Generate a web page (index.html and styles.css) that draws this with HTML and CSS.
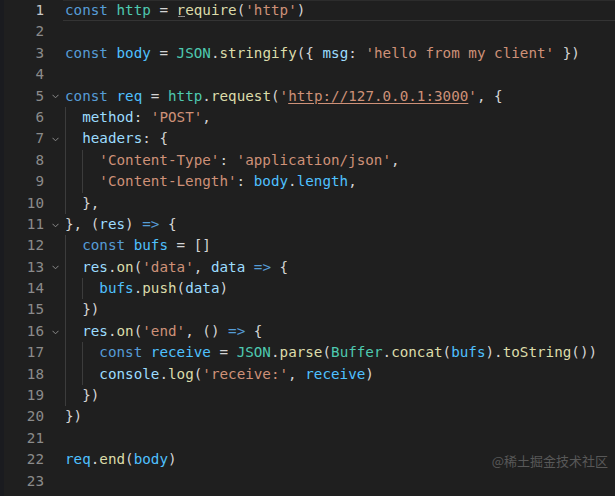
FILE: index.html
```html
<!DOCTYPE html>
<html>
<head>
<meta charset="utf-8">
<link rel="stylesheet" href="styles.css">
</head>
<body>
<div class="editor">
  <div class="line current"><span class="num">1</span><span class="fold"></span><span class="code"><span class="k">const</span> <span class="t">http</span> = <span class="f hint">r</span><span class="f">equire</span>(<span class="s">'http'</span>)</span></div>
  <div class="line"><span class="num">2</span><span class="fold"></span><span class="code"></span></div>
  <div class="line"><span class="num">3</span><span class="fold"></span><span class="code"><span class="k">const</span> <span class="c">body</span> = <span class="t">JSON</span>.<span class="f">stringify</span>({ <span class="v">msg</span>: <span class="s">'hello from my client'</span> })</span></div>
  <div class="line"><span class="num">4</span><span class="fold"></span><span class="code"></span></div>
  <div class="line"><span class="num">5</span><span class="fold"><svg width="7" height="5" viewBox="0 0 7 5"><polyline points="0.5,0.8 3.5,3.8 6.5,0.8" fill="none" stroke="#8b8b8b" stroke-width="1"/></svg></span><span class="code"><span class="k">const</span> <span class="c">req</span> = <span class="t">http</span>.<span class="f">request</span>(<span class="s">'<span class="link">http://127.0.0.1:3000</span>'</span>, {</span></div>
  <div class="line"><span class="num">6</span><span class="fold"></span><span class="code"><span class="ind"></span><span class="v">method</span>: <span class="s">'POST'</span>,</span></div>
  <div class="line"><span class="num">7</span><span class="fold"><svg width="7" height="5" viewBox="0 0 7 5"><polyline points="0.5,0.8 3.5,3.8 6.5,0.8" fill="none" stroke="#8b8b8b" stroke-width="1"/></svg></span><span class="code"><span class="ind"></span><span class="v">headers</span>: {</span></div>
  <div class="line"><span class="num">8</span><span class="fold"></span><span class="code"><span class="ind"></span><span class="ind"></span><span class="s">'Content-Type'</span>: <span class="s">'application/json'</span>,</span></div>
  <div class="line"><span class="num">9</span><span class="fold"></span><span class="code"><span class="ind"></span><span class="ind"></span><span class="s">'Content-Length'</span>: <span class="c">body</span>.<span class="c">length</span>,</span></div>
  <div class="line"><span class="num">10</span><span class="fold"></span><span class="code"><span class="ind"></span>},</span></div>
  <div class="line"><span class="num">11</span><span class="fold"><svg width="7" height="5" viewBox="0 0 7 5"><polyline points="0.5,0.8 3.5,3.8 6.5,0.8" fill="none" stroke="#8b8b8b" stroke-width="1"/></svg></span><span class="code">}, (<span class="v">res</span>) <span class="k">=&gt;</span> {</span></div>
  <div class="line"><span class="num">12</span><span class="fold"></span><span class="code"><span class="ind"></span><span class="k">const</span> <span class="c">bufs</span> = []</span></div>
  <div class="line"><span class="num">13</span><span class="fold"><svg width="7" height="5" viewBox="0 0 7 5"><polyline points="0.5,0.8 3.5,3.8 6.5,0.8" fill="none" stroke="#8b8b8b" stroke-width="1"/></svg></span><span class="code"><span class="ind"></span><span class="v">res</span>.<span class="f">on</span>(<span class="s">'data'</span>, <span class="v">data</span> <span class="k">=&gt;</span> {</span></div>
  <div class="line"><span class="num">14</span><span class="fold"></span><span class="code"><span class="ind"></span><span class="ind"></span><span class="c">bufs</span>.<span class="f">push</span>(<span class="v">data</span>)</span></div>
  <div class="line"><span class="num">15</span><span class="fold"></span><span class="code"><span class="ind"></span>})</span></div>
  <div class="line"><span class="num">16</span><span class="fold"><svg width="7" height="5" viewBox="0 0 7 5"><polyline points="0.5,0.8 3.5,3.8 6.5,0.8" fill="none" stroke="#8b8b8b" stroke-width="1"/></svg></span><span class="code"><span class="ind"></span><span class="v">res</span>.<span class="f">on</span>(<span class="s">'end'</span>, () <span class="k">=&gt;</span> {</span></div>
  <div class="line"><span class="num">17</span><span class="fold"></span><span class="code"><span class="ind"></span><span class="ind"></span><span class="k">const</span> <span class="c">receive</span> = <span class="t">JSON</span>.<span class="f">parse</span>(<span class="t">Buffer</span>.<span class="f">concat</span>(<span class="c">bufs</span>).<span class="f">toString</span>())</span></div>
  <div class="line"><span class="num">18</span><span class="fold"></span><span class="code"><span class="ind"></span><span class="ind"></span><span class="v">console</span>.<span class="f">log</span>(<span class="s">'receive:'</span>, <span class="c">receive</span>)</span></div>
  <div class="line"><span class="num">19</span><span class="fold"></span><span class="code"><span class="ind"></span>})</span></div>
  <div class="line"><span class="num">20</span><span class="fold"></span><span class="code">})</span></div>
  <div class="line"><span class="num">21</span><span class="fold"></span><span class="code"></span></div>
  <div class="line"><span class="num">22</span><span class="fold"></span><span class="code"><span class="c">req</span>.<span class="f">end</span>(<span class="c">body</span>)</span></div>
  <div class="line"><span class="num">23</span><span class="fold"></span><span class="code"></span></div>
  <div class="watermark">@稀土掘金技术社区</div>
</div>
</body>
</html>
```
FILE: styles.css
```css
html, body {
  margin: 0;
  padding: 0;
  background: #1f1f1f;
}
.editor {
  position: relative;
  width: 615px;
  height: 496px;
  overflow: hidden;
  background: #1f1f1f;
  border-left: 4px solid #1a1b1f;
  box-sizing: border-box;
  font-family: "DejaVu Sans Mono", "Liberation Mono", monospace;
  font-size: 14.25px;
  color: #d4d4d4;
}
.line {
  display: flex;
  height: 21.4px;
  line-height: 21.4px;
  white-space: pre;
}
.num {
  width: 40px;
  flex: none;
  text-align: right;
  color: #8b8b8b;
}
.current .num {
  color: #c8c8c8;
}
.fold {
  width: 19px;
  flex: none;
  display: flex;
  align-items: center;
  padding-left: 8px;
  box-sizing: border-box;
  padding-top: 1px;
}
.code {
  flex: 1;
  display: block;
  padding-left: 2px;
  white-space: pre;
}
.current .code {
  box-shadow: inset 0 1px 0 #2c2c2c, inset 0 -1px 0 #343434;
}
.ind {
  display: inline-block;
  width: 2ch;
  height: 21.4px;
  vertical-align: top;
  box-shadow: inset 1px 0 0 #3c3c3c;
}
.k { color: #569cd6; }
.v { color: #9cdcfe; }
.c { color: #4fc1ff; }
.t { color: #4ec9b0; }
.f { color: #dcdcaa; }
.s { color: #ce9178; }
.link {
  text-decoration: underline;
  text-decoration-color: #ce9178;
  text-underline-offset: 2px;
}
.hint {
  position: relative;
}
.hint::after {
  content: "";
  position: absolute;
  left: 1px;
  bottom: 1px;
  width: 7px;
  height: 1px;
  background-image: radial-gradient(circle, #9a9a9a 0.8px, transparent 1px);
  background-size: 2.5px 1px;
}
.watermark {
  position: absolute;
  right: 7px;
  top: 452px;
  font-family: "Noto Sans CJK SC", sans-serif;
  font-size: 13px;
  line-height: 18px;
  color: #585858;
}
```
